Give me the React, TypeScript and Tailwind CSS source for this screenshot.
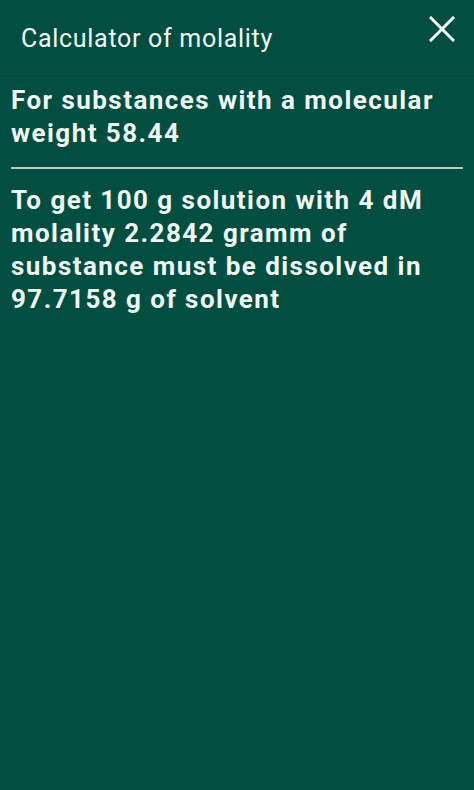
export default function App() {
  return (
    <div
      className="w-[474px] h-[790px] bg-[#024e40] text-white flex flex-col"
      style={{ fontFamily: "Roboto, 'Liberation Sans', sans-serif" }}
    >
      <header className="h-[76px] flex items-start justify-between pl-[21px] pr-[18px] border-b border-[#01463a]">
        <h1 className="mt-[23px] text-[25px] leading-[32px] font-normal tracking-[0.7px] text-[#f2f7f5]">
          Calculator of molality
        </h1>
        <button className="mt-[16px] w-[28px] h-[26px] flex items-center justify-center" aria-label="Close">
          <svg width="26" height="26" viewBox="0 0 26 26" fill="none">
            <path d="M2 2L24 24M24 2L2 24" stroke="#f4f8f6" strokeWidth="3" strokeLinecap="square" />
          </svg>
        </button>
      </header>
      <main className="px-[11px] pt-[8px]">
        <p className="text-[26px] leading-[33px] font-bold text-[#f0f6f3] tracking-[1.45px]">
          For substances with a molecular weight 58.44
        </p>
        <div className="mt-[17px] h-[2px] bg-[#b9c9c3]" />
        <p className="mt-[15px] text-[26px] leading-[33px] font-bold text-[#f0f6f3] tracking-[1.45px]">
          To get 100 g solution with 4 dM molality 2.2842 gramm of substance must be dissolved in 97.7158 g of solvent
        </p>
      </main>
    </div>
  );
}
